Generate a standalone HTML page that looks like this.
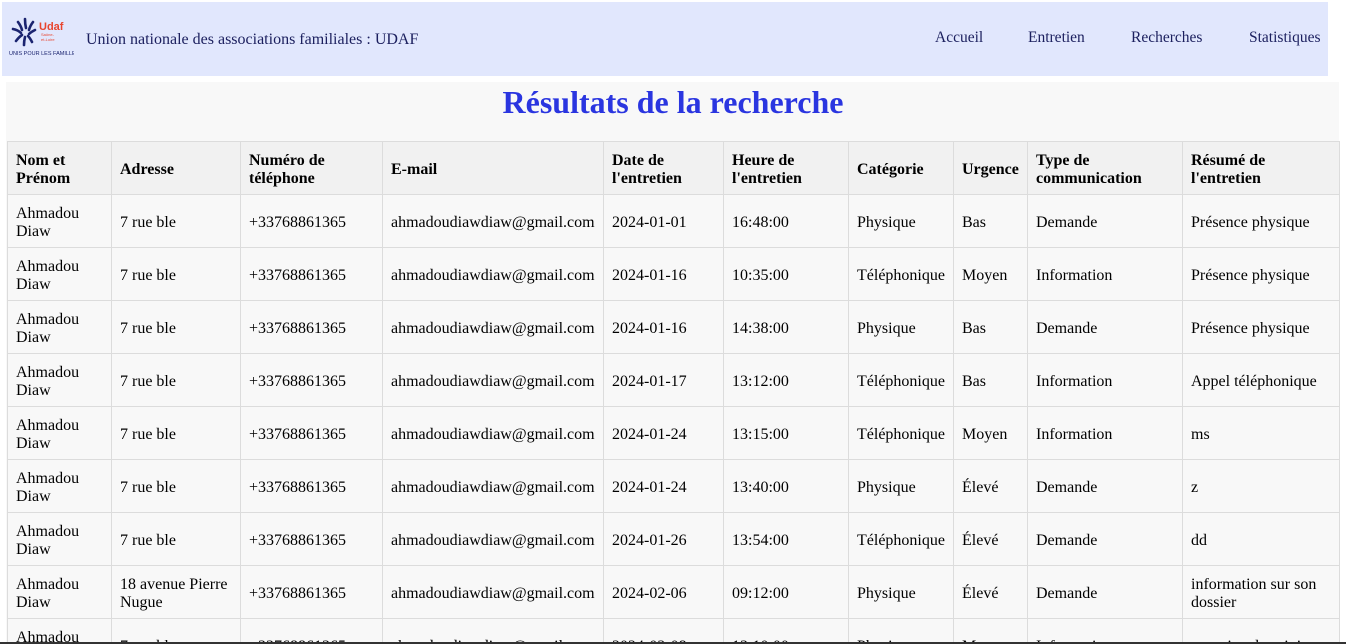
<!DOCTYPE html>
<html><head><meta charset="utf-8"><style>
*{box-sizing:border-box}
html,body{margin:0;height:644px;overflow:hidden}
body{background:#fff;font-family:"Liberation Serif",serif;font-size:16px;color:#000;width:1346px}
.wrap{position:relative;width:1346px;height:644px;overflow:hidden}
.hdr{position:absolute;left:2px;top:2px;width:1326px;height:74px;background:#e1e7fd}
.brand{position:absolute;left:84px;top:29px;font-size:16px;color:#1b1f5e}
.nav a{position:absolute;top:27px;font-size:15.5px;color:#1b1f5e;text-decoration:none}
.panel{position:absolute;left:6px;top:82px;width:1333px;height:570px;background:#f8f8f8}
h1{position:absolute;left:0;width:1346px;top:84px;margin:0;text-align:center;font-size:32px;color:#2a35e0;font-weight:bold}
table{position:absolute;left:7px;top:141px;border-collapse:collapse;table-layout:fixed;width:1332px}
td,th{border:1px solid #dcdcdc;padding:4px 8px 0;height:53px;text-align:left;vertical-align:middle;line-height:18px;font-size:16px}
th{background:#f1f1f1;font-weight:bold}
td{background:#f8f8f8}
.bot{position:absolute;left:0;top:642px;width:1346px;height:2px;background:#333;z-index:5}
</style></head><body><div class="wrap">
<div class="hdr">
<svg style="position:absolute;left:6px;top:14px" width="66" height="44" viewBox="0 0 66 44">
<g stroke="#1b2470" stroke-width="2.6" fill="none" stroke-linecap="round">
<path d="M10 6 q3 4 4 8"/><path d="M17 3 q0 5 1 9"/><path d="M25 6 q-3 4 -4 8"/><path d="M5 13 q5 1 8 4"/><path d="M27 14 q-4 2 -6 4"/><path d="M8 25 q3-4 6-6"/><path d="M24 26 q-2-4 -4-6"/><path d="M16 29 q0-4 1-8"/>
</g>
<text x="31" y="14" font-family="Liberation Sans,sans-serif" font-size="11" font-weight="bold" fill="#e8452e">Udaf</text>
<text x="33" y="20" font-family="Liberation Sans,sans-serif" font-size="4" fill="#e8452e">Saône-</text>
<text x="33" y="25" font-family="Liberation Sans,sans-serif" font-size="4" fill="#e8452e">et-Loire</text>
<text x="1" y="39" font-family="Liberation Sans,sans-serif" font-size="5.5" fill="#1b2470">UNIS POUR LES FAMILLES</text>
</svg>
<div class="brand">Union nationale des associations familiales : UDAF</div>
<div class="nav"><a style="left:933px">Accueil</a><a style="left:1026px">Entretien</a><a style="left:1129px">Recherches</a><a style="left:1247px">Statistiques</a></div>
</div>
<div class="panel"></div>
<h1>Résultats de la recherche</h1>
<table>
<colgroup><col style="width:104px"><col style="width:129px"><col style="width:142px"><col style="width:221px"><col style="width:120px"><col style="width:125px"><col style="width:105px"><col style="width:74px"><col style="width:155px"><col style="width:157px"></colgroup>
<tr><th>Nom et Prénom</th><th>Adresse</th><th>Numéro de téléphone</th><th>E-mail</th><th>Date de l'entretien</th><th>Heure de l'entretien</th><th>Catégorie</th><th>Urgence</th><th>Type de communication</th><th>Résumé de l'entretien</th></tr>
<tr><td>Ahmadou Diaw</td><td>7 rue ble</td><td>+33768861365</td><td>ahmadoudiawdiaw@gmail.com</td><td>2024-01-01</td><td>16:48:00</td><td>Physique</td><td>Bas</td><td>Demande</td><td>Présence physique</td></tr>
<tr><td>Ahmadou Diaw</td><td>7 rue ble</td><td>+33768861365</td><td>ahmadoudiawdiaw@gmail.com</td><td>2024-01-16</td><td>10:35:00</td><td>Téléphonique</td><td>Moyen</td><td>Information</td><td>Présence physique</td></tr>
<tr><td>Ahmadou Diaw</td><td>7 rue ble</td><td>+33768861365</td><td>ahmadoudiawdiaw@gmail.com</td><td>2024-01-16</td><td>14:38:00</td><td>Physique</td><td>Bas</td><td>Demande</td><td>Présence physique</td></tr>
<tr><td>Ahmadou Diaw</td><td>7 rue ble</td><td>+33768861365</td><td>ahmadoudiawdiaw@gmail.com</td><td>2024-01-17</td><td>13:12:00</td><td>Téléphonique</td><td>Bas</td><td>Information</td><td>Appel téléphonique</td></tr>
<tr><td>Ahmadou Diaw</td><td>7 rue ble</td><td>+33768861365</td><td>ahmadoudiawdiaw@gmail.com</td><td>2024-01-24</td><td>13:15:00</td><td>Téléphonique</td><td>Moyen</td><td>Information</td><td>ms</td></tr>
<tr><td>Ahmadou Diaw</td><td>7 rue ble</td><td>+33768861365</td><td>ahmadoudiawdiaw@gmail.com</td><td>2024-01-24</td><td>13:40:00</td><td>Physique</td><td>Élevé</td><td>Demande</td><td>z</td></tr>
<tr><td>Ahmadou Diaw</td><td>7 rue ble</td><td>+33768861365</td><td>ahmadoudiawdiaw@gmail.com</td><td>2024-01-26</td><td>13:54:00</td><td>Téléphonique</td><td>Élevé</td><td>Demande</td><td>dd</td></tr>
<tr><td>Ahmadou Diaw</td><td>18 avenue Pierre Nugue</td><td>+33768861365</td><td>ahmadoudiawdiaw@gmail.com</td><td>2024-02-06</td><td>09:12:00</td><td>Physique</td><td>Élevé</td><td>Demande</td><td>information sur son dossier</td></tr>
<tr><td>Ahmadou Diaw</td><td>7 rue ble</td><td>+33768861365</td><td>ahmadoudiawdiaw@gmail.com</td><td>2024-02-08</td><td>13:10:00</td><td>Physique</td><td>Moyen</td><td>Information</td><td>entretien de suivi</td></tr>
</table>
<div class="bot"></div>
</div></body></html>
